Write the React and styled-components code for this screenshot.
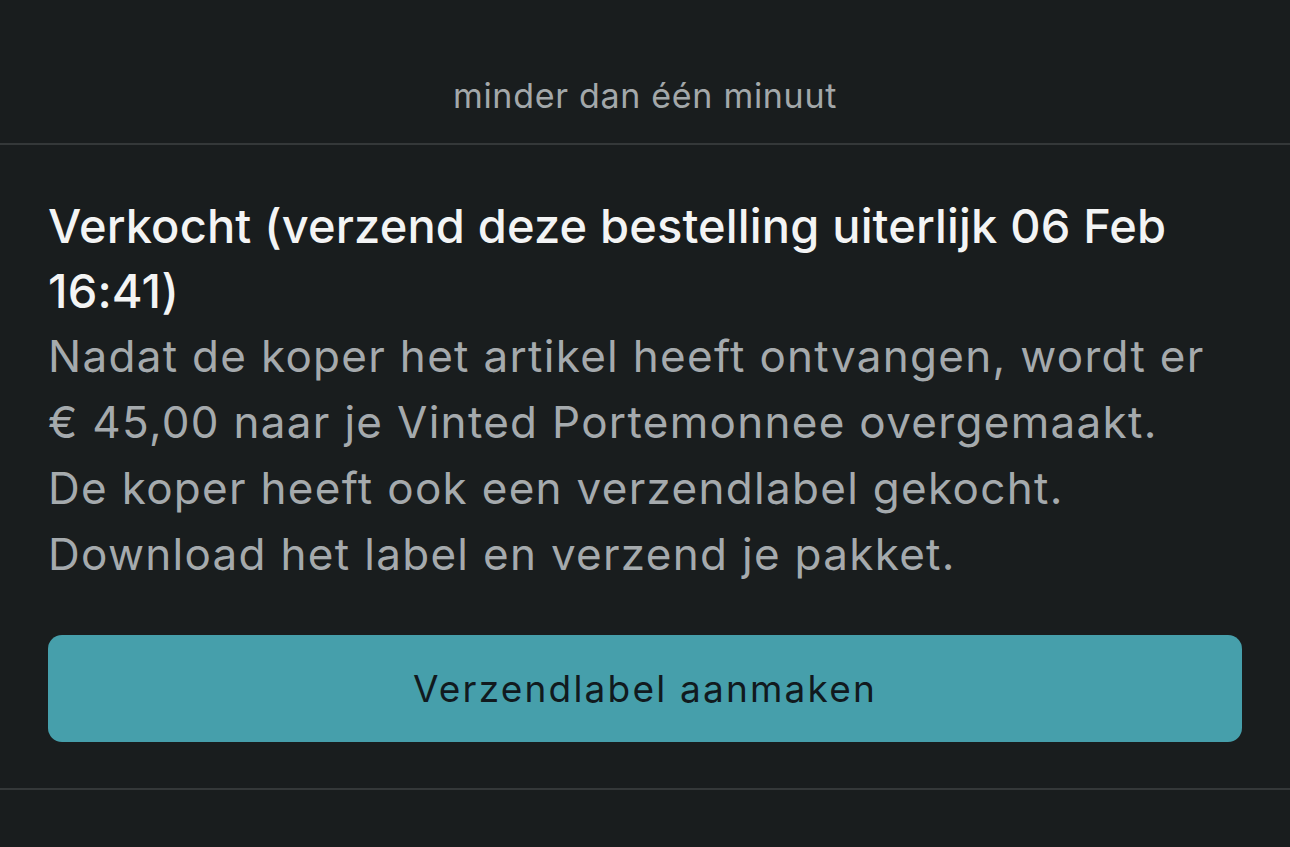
import styled, { createGlobalStyle } from 'styled-components';

const GlobalStyle = createGlobalStyle`
  html, body {
    margin: 0;
    padding: 0;
    background: #191d1e;
  }

  body {
    font-family: Inter, "Noto Sans", sans-serif;
    -webkit-font-smoothing: antialiased;
  }
`;

export default function App() {
  return (
    <>
      <GlobalStyle />
      <Page>
        <TimeRow>
          <TimeLabel>minder dan één minuut</TimeLabel>
        </TimeRow>
        <StatusCard>
          <StatusTitle>Verkocht (verzend deze bestelling uiterlijk 06 Feb 16:41)</StatusTitle>
          <StatusBody>
            Nadat de koper het artikel heeft ontvangen, wordt er € 45,00 naar je Vinted Portemonnee
            overgemaakt. De koper heeft ook een verzendlabel gekocht. Download het label en verzend
            je pakket.
          </StatusBody>
          <PrimaryButton>Verzendlabel aanmaken</PrimaryButton>
        </StatusCard>
      </Page>
    </>
  );
}

const Page = styled.div`
  width: 1290px;
  min-height: 847px;
  background: #191d1e;
`;

const TimeRow = styled.div`
  display: flex;
  justify-content: center;
  align-items: center;
  height: 145px;
  padding-top: 49px;
  box-sizing: border-box;
  border-bottom: 2px solid #343839;
`;

const TimeLabel = styled.span`
  color: #a3a8aa;
  font-size: 34px;
  line-height: 40px;
  letter-spacing: 0.7px;
`;

const StatusCard = styled.div`
  display: flex;
  flex-direction: column;
  padding: 48px 48px 46px;
  border-bottom: 2px solid #343839;
`;

const StatusTitle = styled.h2`
  margin: 0;
  color: #f3f4f4;
  font-size: 47px;
  font-weight: 500;
  line-height: 65px;
  letter-spacing: 0.15px;
`;

const StatusBody = styled.p`
  margin: 0;
  max-width: 1180px;
  color: #a5aaad;
  font-size: 44px;
  font-weight: 400;
  line-height: 66px;
  letter-spacing: 1.3px;
`;

const PrimaryButton = styled.button`
  margin-top: 48px;
  height: 107px;
  border: none;
  border-radius: 14px;
  background: #469fab;
  color: #111a1e;
  font-family: Inter, "Noto Sans", sans-serif;
  font-size: 37px;
  font-weight: 400;
  letter-spacing: 2.2px;
  cursor: pointer;
`;
